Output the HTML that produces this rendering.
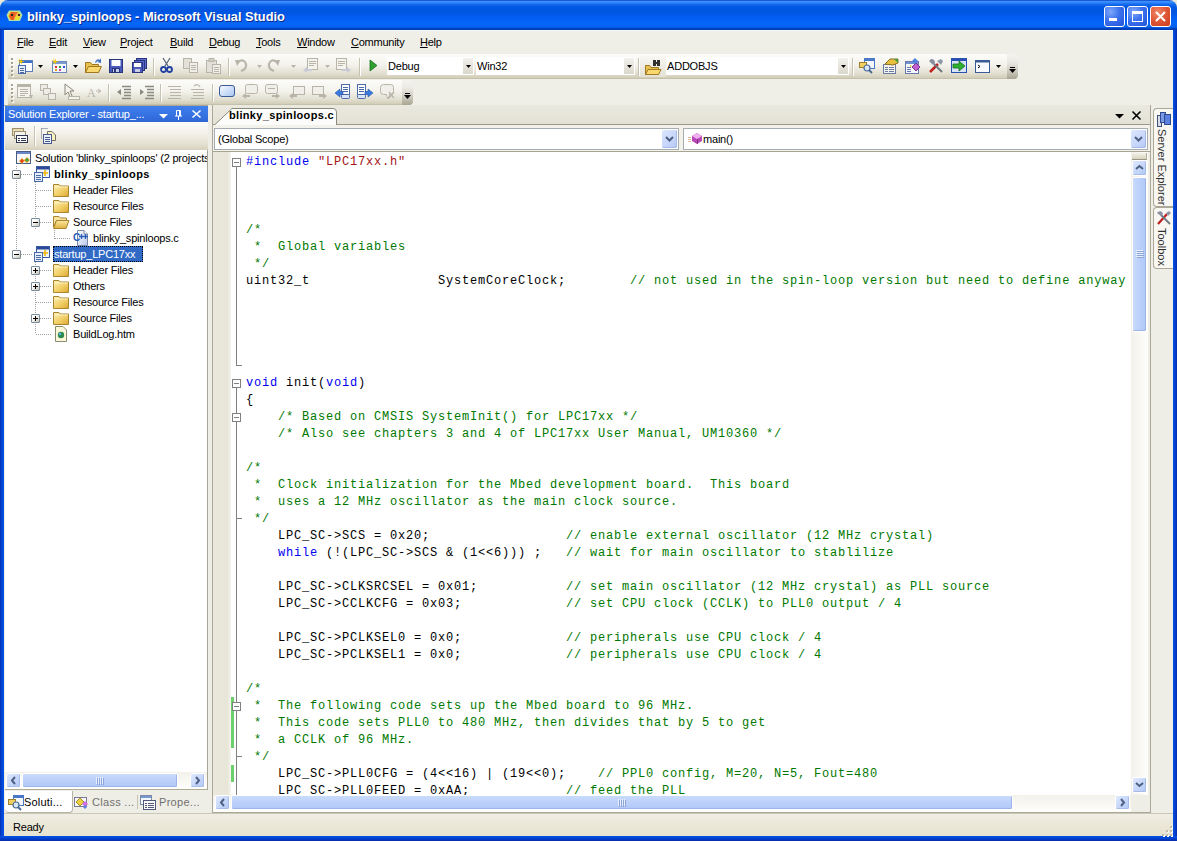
<!DOCTYPE html><html><head><meta charset="utf-8"><style>
*{margin:0;padding:0;box-sizing:border-box}
html,body{width:1177px;height:841px;overflow:hidden;background:#ECE9D8;font-family:"Liberation Sans",sans-serif;font-size:11px;color:#000;position:relative}
.a{position:absolute}
.ns{white-space:pre}
svg{position:absolute;overflow:visible}
</style></head><body>
<div class="a" style="left:0px;top:0px;width:1177px;height:30px;background:linear-gradient(to bottom,#0A3CC0 0px,#3C90FE 1.5px,#3087FA 2.5px,#1468EE 4.5px,#0058E2 7px,#0055E0 12px,#035EF5 18px,#0466F8 23px,#0462F2 27px,#0046C0 28.5px,#0036A8 30px);border-radius:8px 8px 0 0"></div>
<div class="a" style="left:0px;top:30px;width:4px;height:811px;background:linear-gradient(to right,#0A2FB0,#0048D8 45%,#0550E6)"></div>
<div class="a" style="left:1173px;top:30px;width:4px;height:811px;background:linear-gradient(to right,#0550E6,#0040CC 55%,#0A2AA8)"></div>
<div class="a" style="left:0px;top:836px;width:1177px;height:5px;background:linear-gradient(to bottom,#0550E6,#0040CC 55%,#0A2AA8)"></div>
<svg style="left:6px;top:10px" width="17" height="12" viewBox="0 0 17 12"><path d="M3 0.5 H14 L16.5 5 L14 11 H3 L0.5 5Z" fill="#A8E0B0"/><path d="M4 1.5 H12 L15 5 L13 10 H4 L1.5 6Z" fill="#F0D040"/><path d="M5 2 L10 2 L8 10 L5 10 L3 6Z" fill="#E85A20"/><path d="M8 2 H12 L9 7Z" fill="#F07030"/><path d="M10 7 L14 6 L12 10 L9 10Z" fill="#E8E030"/><rect x="5" y="4" width="2" height="2" fill="#203020"/><rect x="12" y="4" width="2" height="2" fill="#402020"/></svg>
<div class="a ns" style="left:27px;top:9px;color:#fff;font-weight:bold;font-size:12.8px;text-shadow:1px 1px 0 #0A2A8A">blinky_spinloops - Microsoft Visual Studio</div>
<div class="a" style="left:1104px;top:6px;width:21px;height:21px;border:1px solid #fff;border-radius:3px;background:radial-gradient(circle at 30% 25%,#7EA8FA 0%,#3D72EE 45%,#2152D8 100%)"></div>
<div class="a" style="left:1127px;top:6px;width:21px;height:21px;border:1px solid #fff;border-radius:3px;background:radial-gradient(circle at 30% 25%,#7EA8FA 0%,#3D72EE 45%,#2152D8 100%)"></div>
<div class="a" style="left:1150px;top:6px;width:21px;height:21px;border:1px solid #fff;border-radius:3px;background:radial-gradient(circle at 35% 30%,#F08A6A 0%,#E25A3A 45%,#C83C1A 100%)"></div>
<div class="a" style="left:1109px;top:18px;width:8px;height:3px;background:#fff"></div>
<div class="a" style="left:1132px;top:11px;width:11px;height:11px;border:1px solid #fff;border-top:3px solid #fff"></div>
<svg style="left:1154px;top:10px" width="13" height="13" viewBox="0 0 13 13"><path d="M2 2 L11 11 M11 2 L2 11" stroke="#fff" stroke-width="2"/></svg>
<div class="a" style="left:4px;top:30px;width:1169px;height:24px;background:#F0EFE7"></div>
<div class="a" style="left:4px;top:30px;width:1169px;height:1px;background:#F6F8FA"></div>
<div class="a ns" style="left:17px;top:36px;font-size:11px;letter-spacing:-0.25px"><span style="text-decoration:underline;text-underline-offset:1px">F</span>ile</div>
<div class="a ns" style="left:49px;top:36px;font-size:11px;letter-spacing:-0.25px"><span style="text-decoration:underline;text-underline-offset:1px">E</span>dit</div>
<div class="a ns" style="left:83px;top:36px;font-size:11px;letter-spacing:-0.25px"><span style="text-decoration:underline;text-underline-offset:1px">V</span>iew</div>
<div class="a ns" style="left:120px;top:36px;font-size:11px;letter-spacing:-0.25px"><span style="text-decoration:underline;text-underline-offset:1px">P</span>roject</div>
<div class="a ns" style="left:170px;top:36px;font-size:11px;letter-spacing:-0.25px"><span style="text-decoration:underline;text-underline-offset:1px">B</span>uild</div>
<div class="a ns" style="left:209px;top:36px;font-size:11px;letter-spacing:-0.25px"><span style="text-decoration:underline;text-underline-offset:1px">D</span>ebug</div>
<div class="a ns" style="left:256px;top:36px;font-size:11px;letter-spacing:-0.25px"><span style="text-decoration:underline;text-underline-offset:1px">T</span>ools</div>
<div class="a ns" style="left:297px;top:36px;font-size:11px;letter-spacing:-0.25px"><span style="text-decoration:underline;text-underline-offset:1px">W</span>indow</div>
<div class="a ns" style="left:351px;top:36px;font-size:11px;letter-spacing:-0.25px"><span style="text-decoration:underline;text-underline-offset:1px">C</span>ommunity</div>
<div class="a ns" style="left:420px;top:36px;font-size:11px;letter-spacing:-0.25px"><span style="text-decoration:underline;text-underline-offset:1px">H</span>elp</div>
<div class="a" style="left:4px;top:54px;width:1169px;height:51px;background:#F0EFE7"></div>
<div class="a" style="left:8px;top:54px;width:1010px;height:25px;border-radius:0 4px 4px 0;background:linear-gradient(to bottom,#FCFCFA 0%,#F3F2EC 45%,#E2DFD0 78%,#D3CFBA 94%,#BDB9A2 100%)"></div>
<div class="a" style="left:11px;top:58px;width:2px;height:2px;background:#A5A290;box-shadow:1px 1px 0 #fff"></div>
<div class="a" style="left:11px;top:62px;width:2px;height:2px;background:#A5A290;box-shadow:1px 1px 0 #fff"></div>
<div class="a" style="left:11px;top:66px;width:2px;height:2px;background:#A5A290;box-shadow:1px 1px 0 #fff"></div>
<div class="a" style="left:11px;top:70px;width:2px;height:2px;background:#A5A290;box-shadow:1px 1px 0 #fff"></div>
<div class="a" style="left:11px;top:74px;width:2px;height:2px;background:#A5A290;box-shadow:1px 1px 0 #fff"></div>
<div class="a" style="left:1007px;top:54px;width:11px;height:25px;border-radius:0 4px 4px 0;background:linear-gradient(to bottom,#F4F3EE 0%,#ECEAE4 30%,#D0CEC2 65%,#A8A592 100%)"></div>
<div class="a" style="left:1010px;top:67px;width:5px;height:1px;background:#000"></div>
<svg style="left:1009px;top:69px" width="7" height="4" viewBox="0 0 7 4"><path d="M0 0 H7 L3.5 4Z" fill="#000"/></svg>
<div class="a" style="left:8px;top:80px;width:404px;height:25px;border-radius:0 4px 4px 0;background:linear-gradient(to bottom,#FCFCFA 0%,#F3F2EC 45%,#E2DFD0 78%,#D3CFBA 94%,#BDB9A2 100%)"></div>
<div class="a" style="left:11px;top:84px;width:2px;height:2px;background:#A5A290;box-shadow:1px 1px 0 #fff"></div>
<div class="a" style="left:11px;top:88px;width:2px;height:2px;background:#A5A290;box-shadow:1px 1px 0 #fff"></div>
<div class="a" style="left:11px;top:92px;width:2px;height:2px;background:#A5A290;box-shadow:1px 1px 0 #fff"></div>
<div class="a" style="left:11px;top:96px;width:2px;height:2px;background:#A5A290;box-shadow:1px 1px 0 #fff"></div>
<div class="a" style="left:11px;top:100px;width:2px;height:2px;background:#A5A290;box-shadow:1px 1px 0 #fff"></div>
<div class="a" style="left:402px;top:80px;width:11px;height:25px;border-radius:0 4px 4px 0;background:linear-gradient(to bottom,#F4F3EE 0%,#ECEAE4 30%,#D0CEC2 65%,#A8A592 100%)"></div>
<div class="a" style="left:405px;top:93px;width:5px;height:1px;background:#000"></div>
<svg style="left:404px;top:95px" width="7" height="4" viewBox="0 0 7 4"><path d="M0 0 H7 L3.5 4Z" fill="#000"/></svg>
<svg style="left:17px;top:58px" width="16" height="16" viewBox="0 0 16 16"><rect x="2.5" y="2.5" width="13" height="11" fill="#fff" stroke="#5A7EB8"/><rect x="3" y="3" width="12" height="2" fill="#3E6FC8"/><rect x="1.5" y="7.5" width="7" height="8" fill="#E8EEF8" stroke="#4A6AA8"/><path d="M3 10.5h4M3 12.5h4M3 14.5h4" stroke="#4A6AA8"/><path d="M2 0 L3 3 L0 2 L3 4 L1 6 L4 4.5 L5 7 L5 4 L8 3 L5 3 L5 0 L4 3Z" fill="#F5C400"/></svg>
<svg style="left:38px;top:65px" width="5" height="3" viewBox="0 0 5 3"><path d="M0 0 H5 L2.5 3Z" fill="#000"/></svg>
<svg style="left:51px;top:58px" width="16" height="16" viewBox="0 0 16 16"><rect x="1.5" y="3.5" width="14" height="11" fill="#F4F8FC" stroke="#6A88B8"/><rect x="2" y="4" width="13" height="2" fill="#7E9CD0"/><rect x="4" y="8" width="2" height="2" fill="#E03030"/><rect x="8" y="8" width="2" height="2" fill="#30A030"/><rect x="12" y="8" width="2" height="2" fill="#3050E0"/><rect x="4" y="11" width="2" height="2" fill="#E0A020"/><rect x="8" y="11" width="2" height="2" fill="#D040A0"/><path d="M2 0 L3 3 L0 2 L3 4 L1 6 L4 4.5 L5 7 L5 4 L8 3 L5 3 L5 0 L4 3Z" fill="#F5C400"/></svg>
<svg style="left:73px;top:65px" width="5" height="3" viewBox="0 0 5 3"><path d="M0 0 H5 L2.5 3Z" fill="#000"/></svg>
<svg style="left:85px;top:58px" width="16" height="16" viewBox="0 0 16 16"><path d="M0.5 4.5 V14.5 H13.5 V6.5 H7 L5.5 4.5Z" fill="#E8C050" stroke="#A07820"/><path d="M0.5 14.5 L3.5 8.5 H16.5 L13.5 14.5Z" fill="#FAD870" stroke="#A07820"/><path d="M10 4 Q12 0 15 2 L16 0 L16 5 L12 4 L14 3 Q12 2 11 5Z" fill="#3A6FC0"/></svg>
<svg style="left:108px;top:58px" width="16" height="16" viewBox="0 0 16 16"><rect x="1.5" y="1.5" width="13" height="13" fill="#4A5AB8" stroke="#2A3580"/><rect x="3.5" y="2" width="9" height="6" fill="#fff"/><rect x="4.5" y="10.5" width="7" height="4" fill="#C8CCE8" stroke="#2A3580"/><rect x="6" y="11" width="2" height="3" fill="#2A3580"/></svg>
<svg style="left:131px;top:58px" width="16" height="16" viewBox="0 0 16 16"><rect x="5.5" y="0.5" width="10" height="10" fill="#5A6AC8" stroke="#2A3580"/><rect x="3.5" y="2.5" width="10" height="10" fill="#5A6AC8" stroke="#2A3580"/><rect x="1.5" y="4.5" width="10" height="10" fill="#4A5AB8" stroke="#2A3580"/><rect x="3" y="5" width="7" height="4" fill="#fff"/><rect x="4" y="11" width="5" height="3" fill="#C8CCE8"/></svg>
<div class="a" style="left:153px;top:58px;width:1px;height:18px;background:#C5C2B0;box-shadow:1px 0 0 #fff"></div>
<svg style="left:160px;top:58px" width="16" height="16" viewBox="0 0 16 16"><path d="M3 0 L8 8 M10 0 L5 8" stroke="#5A6A7A" stroke-width="1.3"/><circle cx="3.5" cy="11.5" r="2.5" fill="none" stroke="#2040A0" stroke-width="1.8"/><circle cx="9.5" cy="11.5" r="2.5" fill="none" stroke="#2040A0" stroke-width="1.8"/></svg>
<svg style="left:183px;top:58px" width="16" height="16" viewBox="0 0 16 16"><rect x="0.5" y="0.5" width="8" height="10" fill="#E2E0D8" stroke="#B8B5A8"/><rect x="6.5" y="4.5" width="8" height="10" fill="#F0EFEA" stroke="#B8B5A8"/><path d="M8 7.5h5M8 9.5h5M8 11.5h5" stroke="#B8B5A8"/></svg>
<svg style="left:206px;top:58px" width="16" height="16" viewBox="0 0 16 16"><rect x="0.5" y="2.5" width="10" height="12" fill="#E2E0D8" stroke="#B8B5A8"/><rect x="3" y="0.5" width="5" height="3" fill="#D0CEC4" stroke="#B8B5A8"/><rect x="6.5" y="6.5" width="8" height="9" fill="#F0EFEA" stroke="#B8B5A8"/><path d="M8 9.5h5M8 11.5h5M8 13.5h5" stroke="#B8B5A8"/></svg>
<div class="a" style="left:228px;top:58px;width:1px;height:18px;background:#C5C2B0;box-shadow:1px 0 0 #fff"></div>
<svg style="left:235px;top:58px" width="16" height="16" viewBox="0 0 16 16"><path d="M3 4 Q9 0 11 6 Q12 11 6 13" fill="none" stroke="#B8B5A8" stroke-width="2.2"/><path d="M0 2 L6 2 L2 8Z" fill="#B8B5A8"/></svg>
<svg style="left:257px;top:65px" width="5" height="3" viewBox="0 0 5 3"><path d="M0 0 H5 L2.5 3Z" fill="#B8B5A8"/></svg>
<svg style="left:268px;top:58px" width="16" height="16" viewBox="0 0 16 16"><path d="M9 4 Q3 0 1 6 Q0 11 6 13" fill="none" stroke="#B8B5A8" stroke-width="2.2"/><path d="M12 2 L6 2 L10 8Z" fill="#B8B5A8"/></svg>
<svg style="left:291px;top:65px" width="5" height="3" viewBox="0 0 5 3"><path d="M0 0 H5 L2.5 3Z" fill="#B8B5A8"/></svg>
<svg style="left:303px;top:58px" width="16" height="16" viewBox="0 0 16 16"><rect x="4.5" y="0.5" width="10" height="11" fill="#F4F3EE" stroke="#B8B5A8"/><path d="M6 3.5h7M6 5.5h7M6 7.5h5" stroke="#B8B5A8"/><path d="M0 12 L4 9 V11 H9 V13 H4 V15Z" fill="#C8CAD8"/></svg>
<svg style="left:325px;top:65px" width="5" height="3" viewBox="0 0 5 3"><path d="M0 0 H5 L2.5 3Z" fill="#B8B5A8"/></svg>
<svg style="left:336px;top:58px" width="16" height="16" viewBox="0 0 16 16"><rect x="0.5" y="0.5" width="10" height="11" fill="#F4F3EE" stroke="#B8B5A8"/><path d="M2 3.5h7M2 5.5h7M2 7.5h5" stroke="#B8B5A8"/><path d="M15 12 L11 9 V11 H6 V13 H11 V15Z" fill="#C8CAD8"/></svg>
<div class="a" style="left:359px;top:58px;width:1px;height:18px;background:#C5C2B0;box-shadow:1px 0 0 #fff"></div>
<svg style="left:370px;top:60px" width="16" height="16" viewBox="0 0 16 16"><path d="M0 0 L7 5.5 L0 11Z" fill="#30A030" stroke="#1A7020" stroke-width="0.8"/></svg>
<div class="a" style="left:387px;top:57px;width:87px;height:18px;background:#fff"></div>
<div class="a" style="left:463px;top:58px;width:10px;height:16px;background:linear-gradient(to bottom,#F2F1EC,#DAD8CC)"></div>
<svg style="left:466px;top:65px" width="5" height="3" viewBox="0 0 5 3"><path d="M0 0 H5 L2.5 3Z" fill="#000"/></svg>
<div class="a ns" style="left:388px;top:60px;font-size:11px;letter-spacing:-0.2px">Debug</div>
<div class="a" style="left:476px;top:57px;width:159px;height:18px;background:#fff"></div>
<div class="a" style="left:624px;top:58px;width:10px;height:16px;background:linear-gradient(to bottom,#F2F1EC,#DAD8CC)"></div>
<svg style="left:627px;top:65px" width="5" height="3" viewBox="0 0 5 3"><path d="M0 0 H5 L2.5 3Z" fill="#000"/></svg>
<div class="a ns" style="left:477px;top:60px;font-size:11px;letter-spacing:-0.2px">Win32</div>
<div class="a" style="left:638px;top:58px;width:1px;height:18px;background:#C5C2B0;box-shadow:1px 0 0 #fff"></div>
<div class="a" style="left:640px;top:56px;width:26px;height:21px;background:linear-gradient(to bottom,#F8F7F2,#E4E1D4)"></div>
<svg style="left:645px;top:59px" width="16" height="16" viewBox="0 0 16 16"><path d="M0.5 6.5 V15.5 H13.5 V8.5 H6 L4.5 6.5Z" fill="#E8C050" stroke="#A07820"/><path d="M0.5 15.5 L3 10.5 H16 L13.5 15.5Z" fill="#FAD870" stroke="#A07820"/><rect x="8" y="1" width="3" height="6" fill="#303030"/><rect x="12" y="1" width="3" height="6" fill="#303030"/><rect x="10" y="3" width="3" height="2" fill="#303030"/></svg>
<div class="a" style="left:666px;top:57px;width:183px;height:18px;background:#fff"></div>
<div class="a" style="left:838px;top:58px;width:10px;height:16px;background:linear-gradient(to bottom,#F2F1EC,#DAD8CC)"></div>
<svg style="left:841px;top:65px" width="5" height="3" viewBox="0 0 5 3"><path d="M0 0 H5 L2.5 3Z" fill="#000"/></svg>
<div class="a ns" style="left:667px;top:60px;font-size:11px;letter-spacing:-0.2px">ADDOBJS</div>
<div class="a" style="left:852px;top:58px;width:1px;height:18px;background:#C5C2B0;box-shadow:1px 0 0 #fff"></div>
<svg style="left:859px;top:58px" width="16" height="16" viewBox="0 0 16 16"><rect x="5.5" y="0.5" width="10" height="10" fill="#F4F8FC" stroke="#4A78C8"/><rect x="6" y="1" width="9" height="2" fill="#4A78C8"/><rect x="0.5" y="4.5" width="7" height="5" fill="#F0D060" stroke="#A08030"/><circle cx="8" cy="10" r="3" fill="#D8E8F8" stroke="#4A6A98" stroke-width="1.2"/><path d="M10 12 L13 15" stroke="#4A6A98" stroke-width="2"/></svg>
<svg style="left:882px;top:58px" width="16" height="16" viewBox="0 0 16 16"><rect x="1.5" y="6.5" width="12" height="9" fill="#F4F3EE" stroke="#6A7AA0"/><path d="M3 9.5h3M3 11.5h3M3 13.5h3M7 9.5h5M7 11.5h5M7 13.5h5" stroke="#6A7AA0"/><path d="M3 6 L8 1 L16 1 L16 5 L11 7Z" fill="#E8C040" stroke="#907020"/><path d="M12 1 L16 1 L16 5Z" fill="#40A040"/></svg>
<svg style="left:905px;top:58px" width="16" height="16" viewBox="0 0 16 16"><rect x="0.5" y="3.5" width="13" height="12" fill="#F4F8FC" stroke="#6A78B0"/><rect x="1" y="4" width="12" height="2" fill="#7090D0"/><path d="M2 9.5h4M2 11.5h4M2 13.5h4" stroke="#6A78B0"/><path d="M7 9 L11 5 L15 9 L11 13Z" fill="#C060D0" stroke="#803090"/><path d="M10 0 L13 3 L10 6 L7 3Z" fill="#5080E0"/><path d="M5 7 L7 8 L5 9Z" fill="#F0C000"/></svg>
<svg style="left:928px;top:58px" width="16" height="16" viewBox="0 0 16 16"><path d="M2 14 L10 6" stroke="#C02020" stroke-width="2.5"/><path d="M14 14 L6 6" stroke="#707880" stroke-width="2"/><path d="M3 1 Q7 1 7 5 L5 7 L1 3Z" fill="#8890A0"/><path d="M9 3 L13 1 L15 3 L13 7Z" fill="#9098A8"/></svg>
<svg style="left:951px;top:58px" width="16" height="16" viewBox="0 0 16 16"><rect x="0.5" y="0.5" width="15" height="14" fill="#D8E4F8" stroke="#2A50B0"/><rect x="1" y="1" width="14" height="2" fill="#2A50B0"/><path d="M2 6 H8 V3 L14 8 L8 13 V10 H2Z" fill="#30B030" stroke="#1A7020" stroke-width="0.8"/></svg>
<svg style="left:975px;top:59px" width="16" height="16" viewBox="0 0 16 16"><rect x="0.5" y="1.5" width="14" height="12" fill="#F8FAFE" stroke="#3A5A98"/><rect x="1" y="2" width="13" height="1.5" fill="#3A5A98"/><path d="M3 6 L5 7.5 L3 9" fill="none" stroke="#000"/></svg>
<svg style="left:996px;top:65px" width="5" height="3" viewBox="0 0 5 3"><path d="M0 0 H5 L2.5 3Z" fill="#000"/></svg>
<svg style="left:17px;top:84px" width="16" height="16" viewBox="0 0 16 16"><rect x="0.5" y="0.5" width="13" height="13" fill="#F4F3EE" stroke="#B8B5A8"/><rect x="1" y="1" width="12" height="2" fill="#B8B5A8"/><path d="M3 5.5h8M3 7.5h8M3 9.5h8M3 11.5h5" stroke="#B8B5A8"/><path d="M12 11 L16 11 L14 15Z" fill="#B8B5A8"/></svg>
<svg style="left:40px;top:84px" width="16" height="16" viewBox="0 0 16 16"><rect x="0.5" y="0.5" width="7" height="6" fill="#EDECE6" stroke="#B8B5A8"/><rect x="3.5" y="4.5" width="7" height="6" fill="#EDECE6" stroke="#B8B5A8"/><rect x="8.5" y="9.5" width="7" height="6" fill="#EDECE6" stroke="#B8B5A8"/></svg>
<svg style="left:64px;top:84px" width="16" height="16" viewBox="0 0 16 16"><path d="M1 0 V11 L4 8 L6 13 L8 12 L6 7 L10 7Z" fill="#F4F3EE" stroke="#8A8878"/><rect x="4.5" y="12.5" width="11" height="3" fill="#F4F3EE" stroke="#B8B5A8"/></svg>
<svg style="left:87px;top:84px" width="16" height="16" viewBox="0 0 16 16"><text x="0" y="13" font-family="Liberation Serif" font-size="12" fill="#B8B5A8">A</text><path d="M9 7 H13 M11 5 L14 7 L11 9" stroke="#B8B5A8" fill="none"/></svg>
<div class="a" style="left:108px;top:84px;width:1px;height:18px;background:#C5C2B0;box-shadow:1px 0 0 #fff"></div>
<svg style="left:116px;top:84px" width="16" height="16" viewBox="0 0 16 16"><path d="M6 2.5h9M8 5.5h7M8 8.5h7M8 11.5h7M6 14.5h9" stroke="#8A8A80" stroke-width="1.5"/><path d="M1 8 L5 5 V11Z" fill="#8A8A80"/></svg>
<svg style="left:139px;top:84px" width="16" height="16" viewBox="0 0 16 16"><path d="M6 2.5h9M8 5.5h7M8 8.5h7M8 11.5h7M6 14.5h9" stroke="#8A8A80" stroke-width="1.5"/><path d="M5 8 L1 5 V11Z" fill="#8A8A80"/></svg>
<div class="a" style="left:160px;top:84px;width:1px;height:18px;background:#C5C2B0;box-shadow:1px 0 0 #fff"></div>
<svg style="left:167px;top:84px" width="16" height="16" viewBox="0 0 16 16"><path d="M1 2.5h13M3 5.5h11M3 8.5h11M3 11.5h11M1 14.5h13" stroke="#B8B5A8" stroke-width="1.2"/></svg>
<svg style="left:190px;top:84px" width="16" height="16" viewBox="0 0 16 16"><path d="M4 2 Q8 -1 10 3 M1 5.5h13M3 8.5h11M3 11.5h11M1 14.5h13" stroke="#B8B5A8" stroke-width="1.2" fill="none"/></svg>
<div class="a" style="left:212px;top:84px;width:1px;height:18px;background:#C5C2B0;box-shadow:1px 0 0 #fff"></div>
<svg style="left:219px;top:84px" width="16" height="16" viewBox="0 0 16 16"><rect x="0.5" y="1.5" width="15" height="11" rx="2.5" fill="url(#bg1)" stroke="#3A5A98"/><defs><linearGradient id="bg1" x1="0" y1="0" x2="1" y2="1"><stop offset="0" stop-color="#F8FBFF"/><stop offset="1" stop-color="#A8C4F0"/></linearGradient></defs></svg>
<svg style="left:242px;top:84px" width="16" height="16" viewBox="0 0 16 16"><rect x="3.5" y="0.5" width="12" height="9" rx="2" fill="#F0EFEA" stroke="#B8B5A8"/><path d="M0 12 L4 9 V11 H8 V13 H4 V15Z" fill="#B8B5A8"/></svg>
<svg style="left:265px;top:84px" width="16" height="16" viewBox="0 0 16 16"><rect x="0.5" y="0.5" width="12" height="9" rx="2" fill="#F0EFEA" stroke="#B8B5A8"/><path d="M3 4.5h7" stroke="#B8B5A8"/><path d="M15 12 L11 9 V11 H7 V13 H11 V15Z" fill="#B8B5A8"/></svg>
<svg style="left:289px;top:84px" width="16" height="16" viewBox="0 0 16 16"><rect x="4.5" y="2.5" width="11" height="8" fill="#F0EFEA" stroke="#B8B5A8"/><path d="M0 12 L4 9 V11 H8 V13 H4 V15Z" fill="#B8B5A8"/></svg>
<svg style="left:312px;top:84px" width="16" height="16" viewBox="0 0 16 16"><rect x="0.5" y="2.5" width="11" height="8" fill="#F0EFEA" stroke="#B8B5A8"/><path d="M15 12 L11 9 V11 H7 V13 H11 V15Z" fill="#B8B5A8"/></svg>
<svg style="left:335px;top:84px" width="16" height="16" viewBox="0 0 16 16"><rect x="6.5" y="0.5" width="8" height="10" fill="#fff" stroke="#4A6AA8"/><path d="M8 3.5h5M8 5.5h5M8 7.5h5" stroke="#4A6AA8"/><rect x="6.5" y="10.5" width="8" height="4" rx="1" fill="#D8E4F8" stroke="#4A6AA8"/><path d="M0 9 L5 5 V7.5 H8 V10.5 H5 V13Z" fill="#3A7AE0" stroke="#2050A0" stroke-width="0.6"/></svg>
<svg style="left:357px;top:84px" width="16" height="16" viewBox="0 0 16 16"><rect x="0.5" y="0.5" width="8" height="10" fill="#fff" stroke="#4A6AA8"/><path d="M2 3.5h5M2 5.5h5M2 7.5h5" stroke="#4A6AA8"/><rect x="0.5" y="10.5" width="8" height="4" rx="1" fill="#D8E4F8" stroke="#4A6AA8"/><path d="M16 9 L11 5 V7.5 H8 V10.5 H11 V13Z" fill="#3A7AE0" stroke="#2050A0" stroke-width="0.6"/></svg>
<svg style="left:380px;top:84px" width="16" height="16" viewBox="0 0 16 16"><rect x="0.5" y="0.5" width="13" height="10" rx="3" fill="#F0EFEA" stroke="#B8B5A8"/><path d="M6 10 L8 15 L10 10" fill="#F0EFEA" stroke="#B8B5A8"/><path d="M9 8 L14 14 M14 8 L9 14" stroke="#B8B5A8" stroke-width="1.3"/></svg>
<div class="a" style="left:4px;top:105px;width:1169px;height:709px;background:#EFEEE6"></div>
<div class="a" style="left:4px;top:105px;width:1169px;height:1px;background:#A9A694"></div>
<div class="a" style="left:5px;top:106px;width:203px;height:17px;background:linear-gradient(to bottom,#3F7FEC,#3570E0 60%,#2E64D2)"></div>
<div class="a ns" style="left:8px;top:108px;color:#fff;font-size:11px;letter-spacing:-0.2px">Solution Explorer - startup_...</div>
<svg style="left:159px;top:114px" width="9" height="5" viewBox="0 0 9 5"><path d="M0 0 H9 L4.5 4.5Z" fill="#fff"/></svg>
<svg style="left:175px;top:110px" width="7" height="10" viewBox="0 0 7 10"><path d="M1.5 0.5 H5.5 V6 M1.5 0.5 V6 M0 6 H7 M3.5 6 V10 M4.5 1 V6" stroke="#fff" fill="none"/></svg>
<svg style="left:192px;top:110px" width="9" height="8" viewBox="0 0 9 8"><path d="M0.5 0.5 L8.5 7.5 M8.5 0.5 L0.5 7.5" stroke="#fff" stroke-width="1.6"/></svg>
<div class="a" style="left:5px;top:122px;width:203px;height:28px;background:linear-gradient(to bottom,#FBFBF9 0%,#F3F1EA 40%,#E4E0D1 80%,#D6D1BC 100%)"></div>
<div class="a" style="left:34px;top:126px;width:1px;height:20px;background:#C5C2B0;box-shadow:1px 0 0 #fff"></div>
<svg style="left:12px;top:128px" width="16" height="16" viewBox="0 0 16 16"><rect x="0.5" y="0.5" width="11" height="7" fill="#E8DCB0" stroke="#9A9070"/><rect x="2.5" y="3.5" width="11" height="7" fill="#F4F3EE" stroke="#9A9070"/><rect x="4.5" y="7.5" width="11" height="7" fill="#F8F8F8" stroke="#303850"/><path d="M6 10.5h2M9 10.5h5M6 12.5h2M9 12.5h5" stroke="#303850"/></svg>
<svg style="left:41px;top:128px" width="16" height="16" viewBox="0 0 16 16"><path d="M0.5 0.5 H7 M0.5 0.5 V11" stroke="#606880" stroke-dasharray="1 1"/><path d="M6.5 3.5 H11 L14.5 7 V12.5 H6.5Z" fill="#F8F0C0" stroke="#707060"/><rect x="2.5" y="6.5" width="8" height="9" fill="#E8F0FC" stroke="#4A5A90"/><path d="M4 9.5h5M4 11.5h5M4 13.5h5" stroke="#4A5A90"/></svg>
<div class="a" style="left:5px;top:150px;width:203px;height:622px;background:#fff"></div>
<div class="a" style="left:16px;top:166px;width:1px;height:88px;background-image:linear-gradient(to bottom,#A0A0A0 50%,transparent 50%);background-size:1px 2px"></div>
<div class="a" style="left:35px;top:182px;width:1px;height:48px;background-image:linear-gradient(to bottom,#A0A0A0 50%,transparent 50%);background-size:1px 2px"></div>
<div class="a" style="left:35px;top:262px;width:1px;height:72px;background-image:linear-gradient(to bottom,#A0A0A0 50%,transparent 50%);background-size:1px 2px"></div>
<div class="a" style="left:54px;top:230px;width:1px;height:9px;background-image:linear-gradient(to bottom,#A0A0A0 50%,transparent 50%);background-size:1px 2px"></div>
<div class="a" style="left:21px;top:174px;width:12px;height:1px;background-image:linear-gradient(to right,#A0A0A0 50%,transparent 50%);background-size:2px 1px"></div>
<div class="a" style="left:21px;top:254px;width:12px;height:1px;background-image:linear-gradient(to right,#A0A0A0 50%,transparent 50%);background-size:2px 1px"></div>
<div class="a" style="left:36px;top:190px;width:16px;height:1px;background-image:linear-gradient(to right,#A0A0A0 50%,transparent 50%);background-size:2px 1px"></div>
<div class="a" style="left:36px;top:206px;width:16px;height:1px;background-image:linear-gradient(to right,#A0A0A0 50%,transparent 50%);background-size:2px 1px"></div>
<div class="a" style="left:36px;top:222px;width:16px;height:1px;background-image:linear-gradient(to right,#A0A0A0 50%,transparent 50%);background-size:2px 1px"></div>
<div class="a" style="left:36px;top:270px;width:16px;height:1px;background-image:linear-gradient(to right,#A0A0A0 50%,transparent 50%);background-size:2px 1px"></div>
<div class="a" style="left:36px;top:286px;width:16px;height:1px;background-image:linear-gradient(to right,#A0A0A0 50%,transparent 50%);background-size:2px 1px"></div>
<div class="a" style="left:36px;top:302px;width:16px;height:1px;background-image:linear-gradient(to right,#A0A0A0 50%,transparent 50%);background-size:2px 1px"></div>
<div class="a" style="left:36px;top:318px;width:16px;height:1px;background-image:linear-gradient(to right,#A0A0A0 50%,transparent 50%);background-size:2px 1px"></div>
<div class="a" style="left:36px;top:334px;width:16px;height:1px;background-image:linear-gradient(to right,#A0A0A0 50%,transparent 50%);background-size:2px 1px"></div>
<div class="a" style="left:55px;top:238px;width:16px;height:1px;background-image:linear-gradient(to right,#A0A0A0 50%,transparent 50%);background-size:2px 1px"></div>
<svg style="left:15px;top:150px" width="16" height="16" viewBox="0 0 16 16"><rect x="1.5" y="1.5" width="14" height="12" fill="#F8F8FC" stroke="#4A5A80"/><rect x="2" y="2" width="13" height="2" fill="#6A88C8"/><path d="M4 11 L7 8 L9 10 L12 7 L15 10 L12 13 L9 11 L7 14Z" fill="#E8A020"/><path d="M5 11 L7 9 L9 11 L7 13Z" fill="#E04020"/><path d="M10 10 L12 8 L14 10 L12 12Z" fill="#40A040"/></svg>
<div class="a ns" style="left:35px;top:152px;font-size:11px;;letter-spacing:-0.2px">Solution 'blinky_spinloops' (2 projects)</div>
<div class="a" style="left:12px;top:170px;width:9px;height:9px;border:1px solid #7A8A99;border-radius:1px;background:linear-gradient(135deg,#fff 30%,#C6C3B6 100%)"></div>
<div class="a" style="left:14px;top:174px;width:5px;height:1px;background:#000"></div>
<svg style="left:34px;top:166px" width="16" height="16" viewBox="0 0 16 16"><rect x="2.5" y="0.5" width="13" height="11" fill="#F0F4FC" stroke="#3A5AA0"/><rect x="3" y="1" width="12" height="2.5" fill="#2A4A98"/><path d="M11 4 V10 M8 7 H14" stroke="#E8B810" stroke-width="1.6"/><rect x="0.5" y="6.5" width="8" height="9" fill="#E8EEF8" stroke="#4A6AA8"/><path d="M2 9.5h5M2 11.5h5M2 13.5h5" stroke="#4A6AA8"/></svg>
<div class="a ns" style="left:54px;top:168px;font-size:11px;font-weight:bold;letter-spacing:0.37px;">blinky_spinloops</div>
<svg style="left:53px;top:182px" width="16" height="16" viewBox="0 0 16 16"><path d="M0.5 2.5 H6 L7.5 4 H15.5 V14.5 H0.5Z" fill="url(#fg)" stroke="#A8842C"/><path d="M1 5 H15" stroke="#FFF4C0"/><defs><linearGradient id="fg" x1="0" y1="0" x2="1" y2="1"><stop offset="0" stop-color="#FDF0B8"/><stop offset="0.6" stop-color="#F0CC60"/><stop offset="1" stop-color="#D8A838"/></linearGradient></defs></svg>
<div class="a ns" style="left:73px;top:184px;font-size:11px;;letter-spacing:-0.2px">Header Files</div>
<svg style="left:53px;top:198px" width="16" height="16" viewBox="0 0 16 16"><path d="M0.5 2.5 H6 L7.5 4 H15.5 V14.5 H0.5Z" fill="url(#fg)" stroke="#A8842C"/><path d="M1 5 H15" stroke="#FFF4C0"/><defs><linearGradient id="fg" x1="0" y1="0" x2="1" y2="1"><stop offset="0" stop-color="#FDF0B8"/><stop offset="0.6" stop-color="#F0CC60"/><stop offset="1" stop-color="#D8A838"/></linearGradient></defs></svg>
<div class="a ns" style="left:73px;top:200px;font-size:11px;;letter-spacing:-0.2px">Resource Files</div>
<div class="a" style="left:31px;top:218px;width:9px;height:9px;border:1px solid #7A8A99;border-radius:1px;background:linear-gradient(135deg,#fff 30%,#C6C3B6 100%)"></div>
<div class="a" style="left:33px;top:222px;width:5px;height:1px;background:#000"></div>
<svg style="left:53px;top:214px" width="16" height="16" viewBox="0 0 16 16"><path d="M0.5 2.5 H6 L7.5 4 H13.5 V6.5 H3.5 L0.5 13Z" fill="#F8E4A0" stroke="#A8842C"/><path d="M0.5 14.5 L3.5 6.5 H16 L13 14.5Z" fill="url(#fg2)" stroke="#A8842C"/><defs><linearGradient id="fg2" x1="0" y1="0" x2="0" y2="1"><stop offset="0" stop-color="#FCE8A0"/><stop offset="1" stop-color="#E0B040"/></linearGradient></defs></svg>
<div class="a ns" style="left:73px;top:216px;font-size:11px;;letter-spacing:-0.2px">Source Files</div>
<svg style="left:73px;top:230px" width="16" height="16" viewBox="0 0 16 16"><defs><linearGradient id="cg" x1="0" y1="0" x2="1" y2="1"><stop offset="0" stop-color="#FFFFFF"/><stop offset="1" stop-color="#B8C8EC"/></linearGradient></defs><path d="M4.5 0.5 H11 L14.5 4 V15.5 H4.5Z" fill="url(#cg)" stroke="#7A88A8"/><path d="M11 0.5 V4 H14.5" fill="#fff" stroke="#7A88A8"/><text x="0" y="11" font-family="Liberation Sans" font-weight="bold" font-size="10" fill="#2A5AB8">C</text><path d="M8.5 4 V9 M6 6.5 H11 M12.5 4 V9 M10 6.5 H15" stroke="#2A5AB8" stroke-width="1.3"/></svg>
<div class="a ns" style="left:93px;top:232px;font-size:11px;;letter-spacing:-0.2px">blinky_spinloops.c</div>
<div class="a" style="left:12px;top:250px;width:9px;height:9px;border:1px solid #7A8A99;border-radius:1px;background:linear-gradient(135deg,#fff 30%,#C6C3B6 100%)"></div>
<div class="a" style="left:14px;top:254px;width:5px;height:1px;background:#000"></div>
<svg style="left:34px;top:246px" width="16" height="16" viewBox="0 0 16 16"><rect x="2.5" y="0.5" width="13" height="11" fill="#F0F4FC" stroke="#3A5AA0"/><rect x="3" y="1" width="12" height="2.5" fill="#2A4A98"/><path d="M11 4 V10 M8 7 H14" stroke="#E8B810" stroke-width="1.6"/><rect x="0.5" y="6.5" width="8" height="9" fill="#E8EEF8" stroke="#4A6AA8"/><path d="M2 9.5h5M2 11.5h5M2 13.5h5" stroke="#4A6AA8"/></svg>
<div class="a" style="left:53px;top:246px;width:90px;height:16px;background:#316AC5;outline:1px dotted #000;outline-offset:-1px"></div>
<div class="a ns" style="left:54px;top:248px;font-size:11px;color:#fff;;letter-spacing:-0.2px">startup_LPC17xx</div>
<div class="a" style="left:31px;top:266px;width:9px;height:9px;border:1px solid #7A8A99;border-radius:1px;background:linear-gradient(135deg,#fff 30%,#C6C3B6 100%)"></div>
<div class="a" style="left:33px;top:270px;width:5px;height:1px;background:#000"></div>
<div class="a" style="left:35px;top:268px;width:1px;height:5px;background:#000"></div>
<svg style="left:53px;top:262px" width="16" height="16" viewBox="0 0 16 16"><path d="M0.5 2.5 H6 L7.5 4 H15.5 V14.5 H0.5Z" fill="url(#fg)" stroke="#A8842C"/><path d="M1 5 H15" stroke="#FFF4C0"/><defs><linearGradient id="fg" x1="0" y1="0" x2="1" y2="1"><stop offset="0" stop-color="#FDF0B8"/><stop offset="0.6" stop-color="#F0CC60"/><stop offset="1" stop-color="#D8A838"/></linearGradient></defs></svg>
<div class="a ns" style="left:73px;top:264px;font-size:11px;;letter-spacing:-0.2px">Header Files</div>
<div class="a" style="left:31px;top:282px;width:9px;height:9px;border:1px solid #7A8A99;border-radius:1px;background:linear-gradient(135deg,#fff 30%,#C6C3B6 100%)"></div>
<div class="a" style="left:33px;top:286px;width:5px;height:1px;background:#000"></div>
<div class="a" style="left:35px;top:284px;width:1px;height:5px;background:#000"></div>
<svg style="left:53px;top:278px" width="16" height="16" viewBox="0 0 16 16"><path d="M0.5 2.5 H6 L7.5 4 H15.5 V14.5 H0.5Z" fill="url(#fg)" stroke="#A8842C"/><path d="M1 5 H15" stroke="#FFF4C0"/><defs><linearGradient id="fg" x1="0" y1="0" x2="1" y2="1"><stop offset="0" stop-color="#FDF0B8"/><stop offset="0.6" stop-color="#F0CC60"/><stop offset="1" stop-color="#D8A838"/></linearGradient></defs></svg>
<div class="a ns" style="left:73px;top:280px;font-size:11px;;letter-spacing:-0.2px">Others</div>
<svg style="left:53px;top:294px" width="16" height="16" viewBox="0 0 16 16"><path d="M0.5 2.5 H6 L7.5 4 H15.5 V14.5 H0.5Z" fill="url(#fg)" stroke="#A8842C"/><path d="M1 5 H15" stroke="#FFF4C0"/><defs><linearGradient id="fg" x1="0" y1="0" x2="1" y2="1"><stop offset="0" stop-color="#FDF0B8"/><stop offset="0.6" stop-color="#F0CC60"/><stop offset="1" stop-color="#D8A838"/></linearGradient></defs></svg>
<div class="a ns" style="left:73px;top:296px;font-size:11px;;letter-spacing:-0.2px">Resource Files</div>
<div class="a" style="left:31px;top:314px;width:9px;height:9px;border:1px solid #7A8A99;border-radius:1px;background:linear-gradient(135deg,#fff 30%,#C6C3B6 100%)"></div>
<div class="a" style="left:33px;top:318px;width:5px;height:1px;background:#000"></div>
<div class="a" style="left:35px;top:316px;width:1px;height:5px;background:#000"></div>
<svg style="left:53px;top:310px" width="16" height="16" viewBox="0 0 16 16"><path d="M0.5 2.5 H6 L7.5 4 H15.5 V14.5 H0.5Z" fill="url(#fg)" stroke="#A8842C"/><path d="M1 5 H15" stroke="#FFF4C0"/><defs><linearGradient id="fg" x1="0" y1="0" x2="1" y2="1"><stop offset="0" stop-color="#FDF0B8"/><stop offset="0.6" stop-color="#F0CC60"/><stop offset="1" stop-color="#D8A838"/></linearGradient></defs></svg>
<div class="a ns" style="left:73px;top:312px;font-size:11px;;letter-spacing:-0.2px">Source Files</div>
<svg style="left:53px;top:326px" width="16" height="16" viewBox="0 0 16 16"><path d="M2.5 0.5 H10 L13.5 4 V15.5 H2.5Z" fill="#FCF8D8" stroke="#8A8A70"/><circle cx="8" cy="9" r="3.2" fill="#2A8A50"/><circle cx="7" cy="8" r="1.3" fill="#60B0E0"/></svg>
<div class="a ns" style="left:73px;top:328px;font-size:11px;;letter-spacing:-0.2px">BuildLog.htm</div>
<div class="a" style="left:5px;top:772px;width:203px;height:17px;background:linear-gradient(to bottom,#F3F1EA,#FEFEFB)"></div>
<div class="a" style="left:6px;top:773px;width:15px;height:15px;border-radius:2px;border:1px solid #FFFFFF;background:linear-gradient(135deg,#E0E9FE 0%,#C8D8FA 50%,#B0C8F6 100%);box-shadow:inset -1px -1px 0 #A8BCE8"></div>
<svg style="left:10px;top:776px" width="7" height="9" viewBox="0 0 7 9"><path d="M5 1 L2 4.5 L5 8" stroke="#4D6185" stroke-width="2" fill="none"/></svg>
<div class="a" style="left:22px;top:773px;width:156px;height:15px;border-radius:2px;border:1px solid #FFFFFF;background:linear-gradient(to bottom,#C9DAFC 0%,#BCD0FA 50%,#B0C8F8 100%);box-shadow:inset -1px -1px 0 #9CB4E6"></div>
<div class="a" style="left:96px;top:777px;width:1px;height:7px;background:#E8F0FF;box-shadow:1px 1px 0 #8CA4D8"></div>
<div class="a" style="left:98px;top:777px;width:1px;height:7px;background:#E8F0FF;box-shadow:1px 1px 0 #8CA4D8"></div>
<div class="a" style="left:100px;top:777px;width:1px;height:7px;background:#E8F0FF;box-shadow:1px 1px 0 #8CA4D8"></div>
<div class="a" style="left:102px;top:777px;width:1px;height:7px;background:#E8F0FF;box-shadow:1px 1px 0 #8CA4D8"></div>
<div class="a" style="left:190px;top:773px;width:15px;height:15px;border-radius:2px;border:1px solid #FFFFFF;background:linear-gradient(135deg,#E0E9FE 0%,#C8D8FA 50%,#B0C8F6 100%);box-shadow:inset -1px -1px 0 #A8BCE8"></div>
<svg style="left:194px;top:776px" width="7" height="9" viewBox="0 0 7 9"><path d="M2 1 L5 4.5 L2 8" stroke="#4D6185" stroke-width="2" fill="none"/></svg>
<div class="a" style="left:5px;top:789px;width:203px;height:1px;background:#B0AC9A"></div>
<div class="a" style="left:207px;top:150px;width:1px;height:640px;background:#A8A596"></div>
<div class="a" style="left:5px;top:790px;width:207px;height:24px;background:#EFEEE6"></div>
<div class="a" style="left:5px;top:791px;width:68px;height:22px;background:#fff;border:1px solid #B8B4A2;border-top:none;border-left:none;border-radius:0 0 4px 4px"></div>
<svg style="left:8px;top:795px" width="16" height="16" viewBox="0 0 16 16"><rect x="5.5" y="0.5" width="10" height="10" fill="#F4F8FC" stroke="#4A78C8"/><rect x="6" y="1" width="9" height="2" fill="#4A78C8"/><rect x="0.5" y="4.5" width="7" height="5" fill="#F0D060" stroke="#A08030"/><circle cx="8" cy="10" r="3" fill="#D8E8F8" stroke="#4A6A98" stroke-width="1.2"/><path d="M10 12 L13 15" stroke="#4A6A98" stroke-width="2"/></svg>
<div class="a ns" style="left:24px;top:796px;font-size:11px;letter-spacing:0.2px">Soluti...</div>
<svg style="left:74px;top:795px" width="16" height="16" viewBox="0 0 16 16"><rect x="0.5" y="2.5" width="12" height="9" fill="#F8F8F8" stroke="#7A7A9A"/><path d="M2 7 L6 3 L10 7 L6 11Z" fill="#F0D040" stroke="#A09030"/><path d="M8 9 L11 6 L14 9 L11 12Z" fill="#D070E0"/><path d="M9 12 L11 10 L13 12 L11 14Z" fill="#6080E0"/></svg>
<div class="a ns" style="left:92px;top:796px;font-size:11px;color:#707070;letter-spacing:0.3px">Class ...</div>
<div class="a" style="left:137px;top:795px;width:1px;height:14px;background:#C8C4B4"></div>
<svg style="left:140px;top:795px" width="16" height="16" viewBox="0 0 16 16"><rect x="0.5" y="0.5" width="11" height="9" fill="#F4F8FC" stroke="#7A8AA8"/><rect x="1" y="1" width="10" height="2" fill="#7A98D0"/><rect x="3.5" y="5.5" width="12" height="9" fill="#F8F8F8" stroke="#505A78"/><path d="M5 8.5h2M8 8.5h6M5 10.5h2M8 10.5h6M5 12.5h2M8 12.5h6" stroke="#505A78"/></svg>
<div class="a ns" style="left:159px;top:796px;font-size:11px;color:#707070;letter-spacing:0.3px">Prope...</div>
<div class="a" style="left:208px;top:105px;width:5px;height:709px;background:#EFEEE6"></div>
<div class="a" style="left:212px;top:105px;width:939px;height:709px;background:#EFEEE6;border-left:1px solid #ACA899;border-right:1px solid #ACA899"></div>
<div class="a" style="left:213px;top:105px;width:937px;height:20px;background:linear-gradient(to bottom,#EAE9DF,#E3E1D5)"></div>
<div class="a" style="left:213px;top:124px;width:937px;height:1px;background:#9C998A"></div>
<svg style="left:213px;top:107px" width="127" height="19" viewBox="0 0 127 19"><path d="M1.5 18 L19 1.5 H120 Q123.5 1.5 123.5 5 V18" fill="#FCFCFA" stroke="#8C8A7C"/></svg>
<div class="a ns" style="left:229px;top:109px;font-size:11px;font-weight:bold;letter-spacing:0.33px">blinky_spinloops.c</div>
<svg style="left:1115px;top:114px" width="9" height="5" viewBox="0 0 9 5"><path d="M0 0 H9 L4.5 4.5Z" fill="#000"/></svg>
<svg style="left:1132px;top:111px" width="9" height="9" viewBox="0 0 9 9"><path d="M0.5 0.5 L8.5 8.5 M8.5 0.5 L0.5 8.5" stroke="#000" stroke-width="1.6"/></svg>
<div class="a" style="left:213px;top:125px;width:937px;height:27px;background:#F2F1EA"></div>
<div class="a" style="left:214px;top:128px;width:465px;height:22px;background:#fff;border:1px solid #A5ACB2"></div>
<div class="a" style="left:662px;top:130px;width:15px;height:18px;border-radius:2px;background:linear-gradient(135deg,#DDE6FC 0%,#C6D5FA 60%,#B4C8F5 100%);box-shadow:inset -1px -1px 0 #A6BAE6"></div>
<svg style="left:665px;top:136px" width="9" height="6" viewBox="0 0 9 6"><path d="M1 1 L4.5 4.5 L8 1" stroke="#4D6185" stroke-width="2" fill="none"/></svg>
<div class="a" style="left:683px;top:128px;width:465px;height:22px;background:#fff;border:1px solid #A5ACB2"></div>
<div class="a" style="left:1131px;top:130px;width:15px;height:18px;border-radius:2px;background:linear-gradient(135deg,#DDE6FC 0%,#C6D5FA 60%,#B4C8F5 100%);box-shadow:inset -1px -1px 0 #A6BAE6"></div>
<svg style="left:1134px;top:136px" width="9" height="6" viewBox="0 0 9 6"><path d="M1 1 L4.5 4.5 L8 1" stroke="#4D6185" stroke-width="2" fill="none"/></svg>
<div class="a ns" style="left:218px;top:133px;font-size:11px;letter-spacing:-0.2px">(Global Scope)</div>
<svg style="left:688px;top:132px" width="15" height="13" viewBox="0 0 15 13"><path d="M0 5.5h3M0 7.5h3M0 9.5h3" stroke="#D8B898"/><path d="M4 4 L9 1 L14 4 V9 L9 12 L4 9Z" fill="#B848B8"/><path d="M4 4 L9 7 L14 4 L9 1Z" fill="#F0B0F0"/><path d="M9.5 7 V12" stroke="#803080"/></svg>
<div class="a ns" style="left:703px;top:133px;font-size:11px;letter-spacing:-0.2px">main()</div>
<div class="a" style="left:213px;top:151px;width:937px;height:1px;background:#A7A493"></div>
<div class="a" style="left:213px;top:152px;width:918px;height:643px;background:#fff"></div>
<div class="a" style="left:213px;top:152px;width:18px;height:643px;background:linear-gradient(to right,#EAE8DC,#E8E6D8 80%,#F6F5EF)"></div>
<div class="a" style="left:231px;top:697px;width:3px;height:51px;background:#6CD06C"></div>
<div class="a" style="left:231px;top:765px;width:3px;height:17px;background:#6CD06C"></div>
<div class="a" style="left:236px;top:167px;width:1px;height:199px;background:#808080"></div>
<div class="a" style="left:236px;top:388px;width:1px;height:407px;background:#808080"></div>
<div class="a" style="left:237px;top:365px;width:5px;height:1px;background:#808080"></div>
<div class="a" style="left:237px;top:518px;width:5px;height:1px;background:#808080"></div>
<div class="a" style="left:237px;top:756px;width:5px;height:1px;background:#808080"></div>
<div class="a" style="left:232px;top:158px;width:9px;height:9px;background:#fff;border:1px solid #808080"></div>
<div class="a" style="left:234px;top:162px;width:5px;height:1px;background:#808080"></div>
<div class="a" style="left:232px;top:379px;width:9px;height:9px;background:#fff;border:1px solid #808080"></div>
<div class="a" style="left:234px;top:383px;width:5px;height:1px;background:#808080"></div>
<div class="a" style="left:232px;top:413px;width:9px;height:9px;background:#fff;border:1px solid #808080"></div>
<div class="a" style="left:234px;top:417px;width:5px;height:1px;background:#808080"></div>
<div class="a" style="left:232px;top:702px;width:9px;height:9px;background:#fff;border:1px solid #808080"></div>
<div class="a" style="left:234px;top:706px;width:5px;height:1px;background:#808080"></div>
<div class="a" style="left:213px;top:152px;width:918px;height:643px;overflow:hidden">
<div class="a ns" style="left:33px;top:2px;font-family:'Liberation Mono',monospace;font-size:12px;letter-spacing:0.8px;line-height:17px"><span style="color:#0000F0">#include</span> <span style="color:#A31515">&quot;LPC17xx.h&quot;</span>



<span style="color:#007800">/*</span>
<span style="color:#007800"> *  Global variables</span>
<span style="color:#007800"> */</span>
uint32_t                SystemCoreClock;        <span style="color:#007800">// not used in the spin-loop version but need to define anyway</span>





<span style="color:#0000F0">void</span> init(<span style="color:#0000F0">void</span>)
{
<span style="color:#007800">    /* Based on CMSIS SystemInit() for LPC17xx */</span>
<span style="color:#007800">    /* Also see chapters 3 and 4 of LPC17xx User Manual, UM10360 */</span>

<span style="color:#007800">/*</span>
<span style="color:#007800"> *  Clock initialization for the Mbed development board.  This board</span>
<span style="color:#007800"> *  uses a 12 MHz oscillator as the main clock source.</span>
<span style="color:#007800"> */</span>
    LPC_SC-&gt;SCS = 0x20;                 <span style="color:#007800">// enable external oscillator (12 MHz crystal)</span>
    <span style="color:#0000F0">while</span> (!(LPC_SC-&gt;SCS &amp; (1&lt;&lt;6))) ;   <span style="color:#007800">// wait for main oscillator to stablilize</span>

    LPC_SC-&gt;CLKSRCSEL = 0x01;           <span style="color:#007800">// set main oscillator (12 MHz crystal) as PLL source</span>
    LPC_SC-&gt;CCLKCFG = 0x03;             <span style="color:#007800">// set CPU clock (CCLK) to PLL0 output / 4</span>

    LPC_SC-&gt;PCLKSEL0 = 0x0;             <span style="color:#007800">// peripherals use CPU clock / 4</span>
    LPC_SC-&gt;PCLKSEL1 = 0x0;             <span style="color:#007800">// peripherals use CPU clock / 4</span>

<span style="color:#007800">/*</span>
<span style="color:#007800"> *  The following code sets up the Mbed board to 96 MHz.</span>
<span style="color:#007800"> *  This code sets PLL0 to 480 MHz, then divides that by 5 to get</span>
<span style="color:#007800"> *  a CCLK of 96 MHz.</span>
<span style="color:#007800"> */</span>
    LPC_SC-&gt;PLL0CFG = (4&lt;&lt;16) | (19&lt;&lt;0);    <span style="color:#007800">// PPL0 config, M=20, N=5, Fout=480</span>
    LPC_SC-&gt;PLL0FEED = 0xAA;            <span style="color:#007800">// feed the PLL</span></div></div>
<div class="a" style="left:1131px;top:152px;width:17px;height:643px;background:linear-gradient(to right,#F3F1EA,#FEFEFB)"></div>
<div class="a" style="left:1132px;top:153px;width:15px;height:7px;background:linear-gradient(to bottom,#F4F2E8,#D8D4C0);border-bottom:1px solid #9A9684;border-right:1px solid #B0AC98"></div>
<div class="a" style="left:1132px;top:160px;width:15px;height:16px;border-radius:2px;border:1px solid #FFFFFF;background:linear-gradient(135deg,#E0E9FE 0%,#C8D8FA 50%,#B0C8F6 100%);box-shadow:inset -1px -1px 0 #A8BCE8"></div>
<svg style="left:1135px;top:164px" width="9" height="7" viewBox="0 0 9 7"><path d="M1 5 L4.5 2 L8 5" stroke="#4D6185" stroke-width="2" fill="none"/></svg>
<div class="a" style="left:1132px;top:177px;width:15px;height:155px;border-radius:2px;border:1px solid #FFFFFF;background:linear-gradient(to right,#C9DAFC 0%,#BCD0FA 50%,#B0C8F8 100%);box-shadow:inset -1px -1px 0 #9CB4E6"></div>
<div class="a" style="left:1136px;top:250px;width:7px;height:1px;background:#E8F0FF;box-shadow:1px 1px 0 #8CA4D8"></div>
<div class="a" style="left:1136px;top:252px;width:7px;height:1px;background:#E8F0FF;box-shadow:1px 1px 0 #8CA4D8"></div>
<div class="a" style="left:1136px;top:254px;width:7px;height:1px;background:#E8F0FF;box-shadow:1px 1px 0 #8CA4D8"></div>
<div class="a" style="left:1136px;top:256px;width:7px;height:1px;background:#E8F0FF;box-shadow:1px 1px 0 #8CA4D8"></div>
<div class="a" style="left:1132px;top:777px;width:15px;height:16px;border-radius:2px;border:1px solid #FFFFFF;background:linear-gradient(135deg,#E0E9FE 0%,#C8D8FA 50%,#B0C8F6 100%);box-shadow:inset -1px -1px 0 #A8BCE8"></div>
<svg style="left:1135px;top:781px" width="9" height="7" viewBox="0 0 9 7"><path d="M1 2 L4.5 5 L8 2" stroke="#4D6185" stroke-width="2" fill="none"/></svg>
<div class="a" style="left:213px;top:795px;width:918px;height:17px;background:linear-gradient(to bottom,#F3F1EA,#FEFEFB)"></div>
<div class="a" style="left:215px;top:795px;width:15px;height:15px;border-radius:2px;border:1px solid #FFFFFF;background:linear-gradient(135deg,#E0E9FE 0%,#C8D8FA 50%,#B0C8F6 100%);box-shadow:inset -1px -1px 0 #A8BCE8"></div>
<svg style="left:219px;top:798px" width="7" height="9" viewBox="0 0 7 9"><path d="M5 1 L2 4.5 L5 8" stroke="#4D6185" stroke-width="2" fill="none"/></svg>
<div class="a" style="left:231px;top:795px;width:782px;height:15px;border-radius:2px;border:1px solid #FFFFFF;background:linear-gradient(to bottom,#C9DAFC 0%,#BCD0FA 50%,#B0C8F8 100%);box-shadow:inset -1px -1px 0 #9CB4E6"></div>
<div class="a" style="left:618px;top:799px;width:1px;height:7px;background:#E8F0FF;box-shadow:1px 1px 0 #8CA4D8"></div>
<div class="a" style="left:620px;top:799px;width:1px;height:7px;background:#E8F0FF;box-shadow:1px 1px 0 #8CA4D8"></div>
<div class="a" style="left:622px;top:799px;width:1px;height:7px;background:#E8F0FF;box-shadow:1px 1px 0 #8CA4D8"></div>
<div class="a" style="left:624px;top:799px;width:1px;height:7px;background:#E8F0FF;box-shadow:1px 1px 0 #8CA4D8"></div>
<div class="a" style="left:1115px;top:795px;width:15px;height:15px;border-radius:2px;border:1px solid #FFFFFF;background:linear-gradient(135deg,#E0E9FE 0%,#C8D8FA 50%,#B0C8F6 100%);box-shadow:inset -1px -1px 0 #A8BCE8"></div>
<svg style="left:1119px;top:798px" width="7" height="9" viewBox="0 0 7 9"><path d="M2 1 L5 4.5 L2 8" stroke="#4D6185" stroke-width="2" fill="none"/></svg>
<div class="a" style="left:1131px;top:795px;width:17px;height:17px;background:#EFEEE6"></div>
<div class="a" style="left:213px;top:812px;width:937px;height:1px;background:#ACA899"></div>
<div class="a" style="left:1151px;top:105px;width:22px;height:709px;background:#EFEEE6"></div>
<div class="a" style="left:1153px;top:108px;width:20px;height:99px;background:#F8F7F2;border:1px solid #ACA899;border-right:none;border-radius:4px 0 0 4px"></div>
<div class="a" style="left:1153px;top:207px;width:20px;height:62px;background:#F8F7F2;border:1px solid #ACA899;border-right:none;border-radius:4px 0 0 4px"></div>
<svg style="left:1156px;top:111px" width="16" height="16" viewBox="0 0 16 16"><rect x="1.5" y="4.5" width="4" height="11" fill="#D8DCE8" stroke="#405078"/><rect x="4.5" y="1.5" width="5" height="10" fill="#7A9AE8" stroke="#304A90"/><rect x="8.5" y="3.5" width="6" height="10" fill="#5A80E0" stroke="#304A90"/></svg>
<div class="a ns" style="left:1168px;top:129px;transform:rotate(90deg);transform-origin:0 0;font-size:11px;color:#303030">Server Explorer</div>
<svg style="left:1156px;top:210px" width="16" height="16" viewBox="0 0 16 16"><path d="M2 14 L11 4" stroke="#C02020" stroke-width="2.2"/><path d="M14 14 L5 5" stroke="#707880" stroke-width="1.8"/><path d="M2 2 Q6 0 7 4 L5 6 L1 3Z" fill="#8890A0"/><path d="M10 3 L13 1 L15 3 L12 6Z" fill="#9098A8"/></svg>
<div class="a ns" style="left:1168px;top:228px;transform:rotate(90deg);transform-origin:0 0;font-size:11px;color:#303030">Toolbox</div>
<div class="a" style="left:4px;top:813px;width:1169px;height:23px;background:linear-gradient(to bottom,#B8B4A0 0px,#F0EEE4 1.5px,#ECE9DA 40%,#E6E3D1 100%)"></div>
<div class="a ns" style="left:13px;top:821px;font-size:11px;letter-spacing:-0.2px">Ready</div>
<div class="a" style="left:1170px;top:826px;width:2px;height:2px;background:#C2BEA8;box-shadow:1px 1px 0 #fff"></div>
<div class="a" style="left:1166px;top:830px;width:2px;height:2px;background:#C2BEA8;box-shadow:1px 1px 0 #fff"></div>
<div class="a" style="left:1170px;top:830px;width:2px;height:2px;background:#C2BEA8;box-shadow:1px 1px 0 #fff"></div>
<div class="a" style="left:1162px;top:834px;width:2px;height:2px;background:#C2BEA8;box-shadow:1px 1px 0 #fff"></div>
<div class="a" style="left:1166px;top:834px;width:2px;height:2px;background:#C2BEA8;box-shadow:1px 1px 0 #fff"></div>
<div class="a" style="left:1170px;top:834px;width:2px;height:2px;background:#C2BEA8;box-shadow:1px 1px 0 #fff"></div>
</body></html>
